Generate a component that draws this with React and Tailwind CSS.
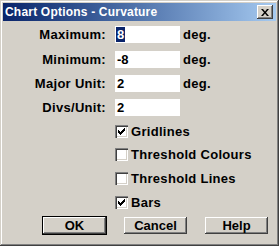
const raised =
  'shadow-[inset_-1px_-1px_#404040,inset_1px_1px_#ffffff,inset_-2px_-2px_#808080,inset_2px_2px_#d4d0c8]'

function Field({ label, value, unit, selected, className = '' }) {
  return (
    <div className={`flex items-center h-[17px] ${className}`}>
      <div className="w-[104px] pr-[1px] text-right tracking-[0.3px]">{label}</div>
      <div className="ml-[8px] w-[65px] h-[17px] bg-white flex items-center pl-[1px]">
        {selected ? (
          <span className="bg-[#0a246a] text-white h-[15px] leading-[15px] px-[1px]">{value}</span>
        ) : (
          <span className="pl-[1px]">{value}</span>
        )}
      </div>
      {unit && <div className="ml-[3px] tracking-[0.3px]">{unit}</div>}
    </div>
  )
}

function Check({ label, checked, className = '' }) {
  return (
    <div className={`flex items-center h-[13px] ml-[112px] ${className}`}>
      <div className="w-[13px] h-[13px] bg-white shadow-[inset_1px_1px_#808080,inset_2px_2px_#404040,inset_-1px_-1px_#ffffff,inset_-2px_-2px_#d4d0c8] flex items-center justify-center">
        {checked && (
          <svg width="7" height="7" viewBox="0 0 7 7">
            <path d="M0 2h1v1h1v1h1v-1h1v-1h1v-1h1v-1h1v3h-1v1h-1v1h-1v1h-1v1h-1v-1h-1v-1h-1v-1h-1z" fill="#000" />
          </svg>
        )}
      </div>
      <div className="ml-[3px] tracking-[0.3px]">{label}</div>
    </div>
  )
}

function Button({ children, isDefault }) {
  return (
    <div
      className={`w-[63px] h-[17px] flex items-center justify-center bg-[#d4d0c8] ${raised} ${
        isDefault ? 'outline outline-1 outline-black' : ''
      }`}
    >
      {children}
    </div>
  )
}

export default function App() {
  return (
    <div className="w-[279px] h-[246px] bg-[#d4d0c8] p-[3px] shadow-[inset_-1px_-1px_#404040,inset_1px_1px_#d4d0c8,inset_-2px_-2px_#808080,inset_2px_2px_#ffffff] font-['Liberation_Sans',Arial,sans-serif] text-[13px] font-bold text-black leading-[17px]">
      <div className="h-[18px] flex items-center bg-gradient-to-r from-[#0a246a] to-[#a6caf0] pl-[2px] pr-[3px]">
        <span className="text-white text-[12px] tracking-[0.2px] leading-[18px]">Chart Options - Curvature</span>
        <div className="ml-auto w-[16px] h-[14px] bg-[#d4d0c8] shadow-[inset_-1px_-1px_#404040,inset_1px_1px_#ffffff,inset_-2px_-2px_#808080] flex items-center justify-center">
          <svg width="8" height="7" viewBox="0 0 8 7">
            <path d="M0 0h2l2 2.5L6 0h2L5 3.5 8 7H6L4 4.5 2 7H0l3-3.5z" fill="#000" />
          </svg>
        </div>
      </div>

      <div className="flex flex-col">
        <Field className="mt-[5px]" label="Maximum:" value="8" unit="deg." selected />
        <Field className="mt-[8px]" label="Minimum:" value="-8" unit="deg." />
        <Field className="mt-[7px]" label="Major Unit:" value="2" unit="deg." />
        <Field className="mt-[7px]" label="Divs/Unit:" value="2" />

        <Check className="mt-[9px]" label="Gridlines" checked />
        <Check className="mt-[10px]" label="Threshold Colours" />
        <Check className="mt-[11px]" label="Threshold Lines" />
        <Check className="mt-[11px]" label="Bars" checked />

        <div className="flex gap-[18px] ml-[40px] mt-[8px]">
          <Button isDefault>OK</Button>
          <Button>Cancel</Button>
          <Button>Help</Button>
        </div>
      </div>
    </div>
  )
}
